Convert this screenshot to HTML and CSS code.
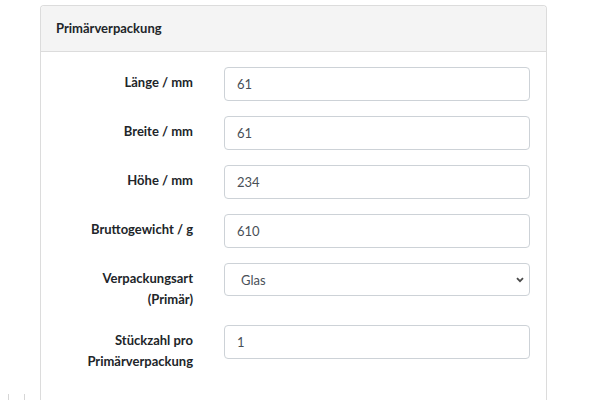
FILE: index.html
```html
<!DOCTYPE html>
<html lang="de">
<head>
<meta charset="utf-8">
<title>Primärverpackung</title>
<link rel="stylesheet" href="styles.css">
</head>
<body>
<div class="page">
  <div class="gutter"><div class="marks"></div></div>
  <div class="card">
    <div class="card-header">Primärverpackung</div>
    <div class="card-body">
      <div class="row">
        <label class="label">Länge / mm</label>
        <input class="control" type="text" value="61">
      </div>
      <div class="row">
        <label class="label">Breite / mm</label>
        <input class="control" type="text" value="61">
      </div>
      <div class="row">
        <label class="label">Höhe / mm</label>
        <input class="control" type="text" value="234">
      </div>
      <div class="row">
        <label class="label">Bruttogewicht / g</label>
        <input class="control" type="text" value="610">
      </div>
      <div class="row">
        <label class="label">Verpackungsart<br>(Primär)</label>
        <div class="select-wrap">
          <select class="control select"><option>Glas</option></select>
          <svg class="chevron" width="8" height="6" viewBox="0 0 8 6"><path d="M1 1.2 L4 4.2 L7 1.2" fill="none" stroke="#4a4a4a" stroke-width="1.8"/></svg>
        </div>
      </div>
      <div class="row">
        <label class="label">Stückzahl pro<br>Primärverpackung</label>
        <input class="control" type="text" value="1">
      </div>
    </div>
  </div>
</div>
</body>
</html>
```
FILE: styles.css
```css
html, body {
  margin: 0;
  padding: 0;
  background: #ffffff;
  height: 400px;
  overflow: hidden;
}
body {
  font-family: Lato, "Liberation Sans", sans-serif;
  font-size: 13px;
  color: #212529;
}
.page {
  display: flex;
  align-items: flex-start;
}
.gutter {
  width: 40px;
  flex: none;
}
.marks {
  margin: 394px 0 0 8px;
  width: 15px;
  height: 6px;
  border-left: 1px solid #d6d6d6;
  border-right: 1px solid #d6d6d6;
}
.card {
  box-sizing: border-box;
  margin-top: 5px;
  width: 507px;
  height: 395px;
  border: 1px solid #dcdcdc;
  border-bottom: none;
  border-radius: 4px 4px 0 0;
  flex: none;
}
.card-header {
  background: #f4f4f4;
  border-bottom: 1px solid #dcdcdc;
  border-radius: 4px 4px 0 0;
  padding: 12px 15px;
  line-height: 21px;
  font-weight: 700;
}
.card-body {
  padding: 15px 16px 0 16px;
  display: flex;
  flex-direction: column;
  gap: 15px;
}
.row {
  display: grid;
  grid-template-columns: 1fr 306px;
  column-gap: 31px;
  align-items: start;
}
.label {
  text-align: right;
  font-weight: 700;
  line-height: 21px;
  padding-top: 5px;
}
.control {
  box-sizing: border-box;
  width: 306px;
  height: 34px;
  margin: 0;
  border: 1px solid #cdd2d7;
  border-radius: 4px;
  padding: 0 12px;
  font-family: inherit;
  font-size: 13px;
  color: #495057;
  background: #fff;
  outline: none;
}
.select-wrap {
  position: relative;
  width: 306px;
  height: 33px;
}
.select {
  height: 33px;
  padding-left: 16px;
  appearance: none;
  -webkit-appearance: none;
}
.chevron {
  position: absolute;
  right: 6px;
  top: 14px;
}
```
